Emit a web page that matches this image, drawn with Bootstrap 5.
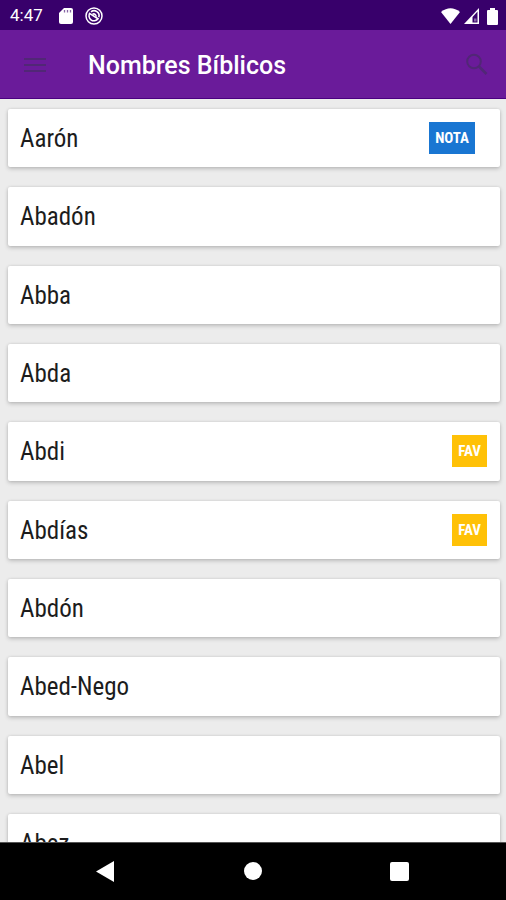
<!DOCTYPE html>
<html lang="es">
<head>
<meta charset="utf-8">
<meta name="viewport" content="width=device-width, initial-scale=1">
<title>Nombres Bíblicos</title>
<link href="https://cdn.jsdelivr.net/npm/bootstrap@5.3.0/dist/css/bootstrap.min.css" rel="stylesheet">
<style>
  body { font-family: Roboto, "Liberation Sans", sans-serif; background: #ececec; }
  .status-bar { background: #38006b; height: 30px; padding: 2px 8px 0 10px; font-size: 17px; }
  .notices { gap: 12px; margin-left: 16px; }
  .app-bar { background: #6a1b9a; height: 69px; padding: 2px 16px 0 22px; border-bottom: 1px solid #4a0080; }
  .app-bar .btn { color: #512776; line-height: 0; }
  .app-title { font-size: 25px; line-height: 32px; font-weight: 500; margin-left: 40px; padding-top: 2px; }
  /* Nine full rows and a peek of the next one */
  .names { display: grid; grid-template-rows: repeat(9, minmax(58px, 1fr)) 28px; row-gap: 20px; padding: 10px 6px 0 8px; min-height: 0; }
  .name-item { min-height: 58px; padding: 0 13px 0 12px; background: #fff; border-radius: 2px; box-shadow: 0 2px 4px rgba(0,0,0,.18), 0 0 3px rgba(0,0,0,.12); }
  .name-item a { color: #1c1c1c; font-family: "Roboto Condensed", "Liberation Sans Narrow", Roboto, sans-serif; font-size: 25px; line-height: 30px; padding-top: 2px; }
  .tag { font-family: "Roboto Condensed", "Liberation Sans Narrow", Roboto, sans-serif; font-weight: 700; font-size: 15px; line-height: 20px; padding: 6px; color: #fff; }
  .tag-note { background: #1976d2; margin-right: 12px; }
  .tag-fav { background: #ffc107; }
  .system-nav { height: 58px; padding: 0 33px; background: #000; border-top: 1px solid #555; }
  .system-nav .btn { line-height: 0; }
</style>
</head>
<body class="vh-100 d-flex flex-column overflow-hidden">
<div class="status-bar d-flex align-items-center flex-shrink-0 text-white">
  <span>4:47</span>
  <div class="notices d-flex align-items-center">
    <svg width="14" height="16" viewBox="0 0 14 16" aria-hidden="true"><path fill="#fff" d="M5 0h7q2 0 2 2v12q0 2-2 2H2q-2 0-2-2V5z"/><path d="M5.500 2v2.500M8.500 2v2.500M11.500 2v2.500" stroke="#38006b" stroke-opacity=".6" stroke-width="1.300"/></svg>
    <svg width="18" height="18" viewBox="0 0 18 18" fill="none" stroke="#fff" aria-hidden="true"><circle cx="9" cy="9" r="8" stroke-width="1.500"/><path d="M5 5.800a5 5 0 1 0 8 6L4.500 6.300M6 4.800a5 5 0 0 1 7.800 5.500" stroke-width="1.600"/><path d="M7.500 7.300a2.300 2.300 0 0 1 3.500 2.500" stroke-width="1.500"/></svg>
  </div>
  <div class="d-flex align-items-center ms-auto">
    <svg width="19" height="16" viewBox="0 0 19 16" aria-hidden="true"><path fill="#fff" d="M0 4Q9.500-3.500 19 4L9.500 16z"/></svg>
    <svg class="ms-1 me-2" width="15" height="16" viewBox="0 0 15 16" aria-hidden="true"><path fill="#fff" fill-rule="evenodd" d="M15 0v16H0zM13.500 3.500 8.500 9v5.500h5z"/><path fill="#fff" d="M10 10.500h2.500v3H10z" opacity=".4"/></svg>
    <svg width="11" height="17" viewBox="0 0 11 17" aria-hidden="true"><path fill="#fff" d="M3 0h5v2h2q1 0 1 1v13q0 1-1 1H1q-1 0-1-1V3q0-1 1-1h2z"/></svg>
  </div>
</div>
<header class="app-bar d-flex align-items-center flex-shrink-0">
  <button class="btn p-0 border-0" type="button" aria-label="Menú"><svg width="26" height="18" viewBox="0 0 26 18"><path d="M2 3h22M2 9h22M2 15h22" stroke="currentColor" stroke-width="2"/></svg></button>
  <h1 class="app-title mb-0 text-white">Nombres Bíblicos</h1>
  <button class="btn p-0 border-0 ms-auto" type="button" aria-label="Buscar"><svg width="26" height="26" viewBox="0 0 26 26" fill="none" stroke="currentColor"><circle cx="10" cy="9.500" r="6.800" stroke-width="2"/><path d="m15 14.500 7.500 7.500" stroke-width="2.700"/></svg></button>
</header>
<main class="flex-grow-1 d-flex flex-column overflow-hidden">
  <ul class="names list-unstyled mb-0 flex-grow-1">
    <li class="name-item d-flex align-items-center justify-content-between"><a class="text-decoration-none" href="#">Aarón</a><span class="tag tag-note">NOTA</span></li>
    <li class="name-item d-flex align-items-center"><a class="text-decoration-none" href="#">Abadón</a></li>
    <li class="name-item d-flex align-items-center"><a class="text-decoration-none" href="#">Abba</a></li>
    <li class="name-item d-flex align-items-center"><a class="text-decoration-none" href="#">Abda</a></li>
    <li class="name-item d-flex align-items-center justify-content-between"><a class="text-decoration-none" href="#">Abdi</a><span class="tag tag-fav">FAV</span></li>
    <li class="name-item d-flex align-items-center justify-content-between"><a class="text-decoration-none" href="#">Abdías</a><span class="tag tag-fav">FAV</span></li>
    <li class="name-item d-flex align-items-center"><a class="text-decoration-none" href="#">Abdón</a></li>
    <li class="name-item d-flex align-items-center"><a class="text-decoration-none" href="#">Abed-Nego</a></li>
    <li class="name-item d-flex align-items-center"><a class="text-decoration-none" href="#">Abel</a></li>
    <li class="name-item d-flex align-items-center"><a class="text-decoration-none" href="#">Abez</a></li>
  </ul>
</main>
<nav class="system-nav d-flex align-items-center justify-content-around flex-shrink-0" aria-label="Sistema">
  <button class="btn p-0 border-0" type="button" aria-label="Atrás"><svg width="20" height="22" viewBox="0 0 20 22"><path fill="#fff" d="M18 0v21L0 10.500z"/></svg></button>
  <button class="btn p-0 border-0" type="button" aria-label="Inicio"><svg width="20" height="20" viewBox="0 0 20 20"><circle cx="10" cy="9" r="9" fill="#fff"/></svg></button>
  <button class="btn p-0 border-0" type="button" aria-label="Recientes"><svg width="20" height="20" viewBox="0 0 20 20"><rect width="19" height="19" rx="2" fill="#fff"/></svg></button>
</nav>
<script src="https://cdn.jsdelivr.net/npm/bootstrap@5.3.0/dist/js/bootstrap.bundle.min.js"></script>
</body>
</html>
